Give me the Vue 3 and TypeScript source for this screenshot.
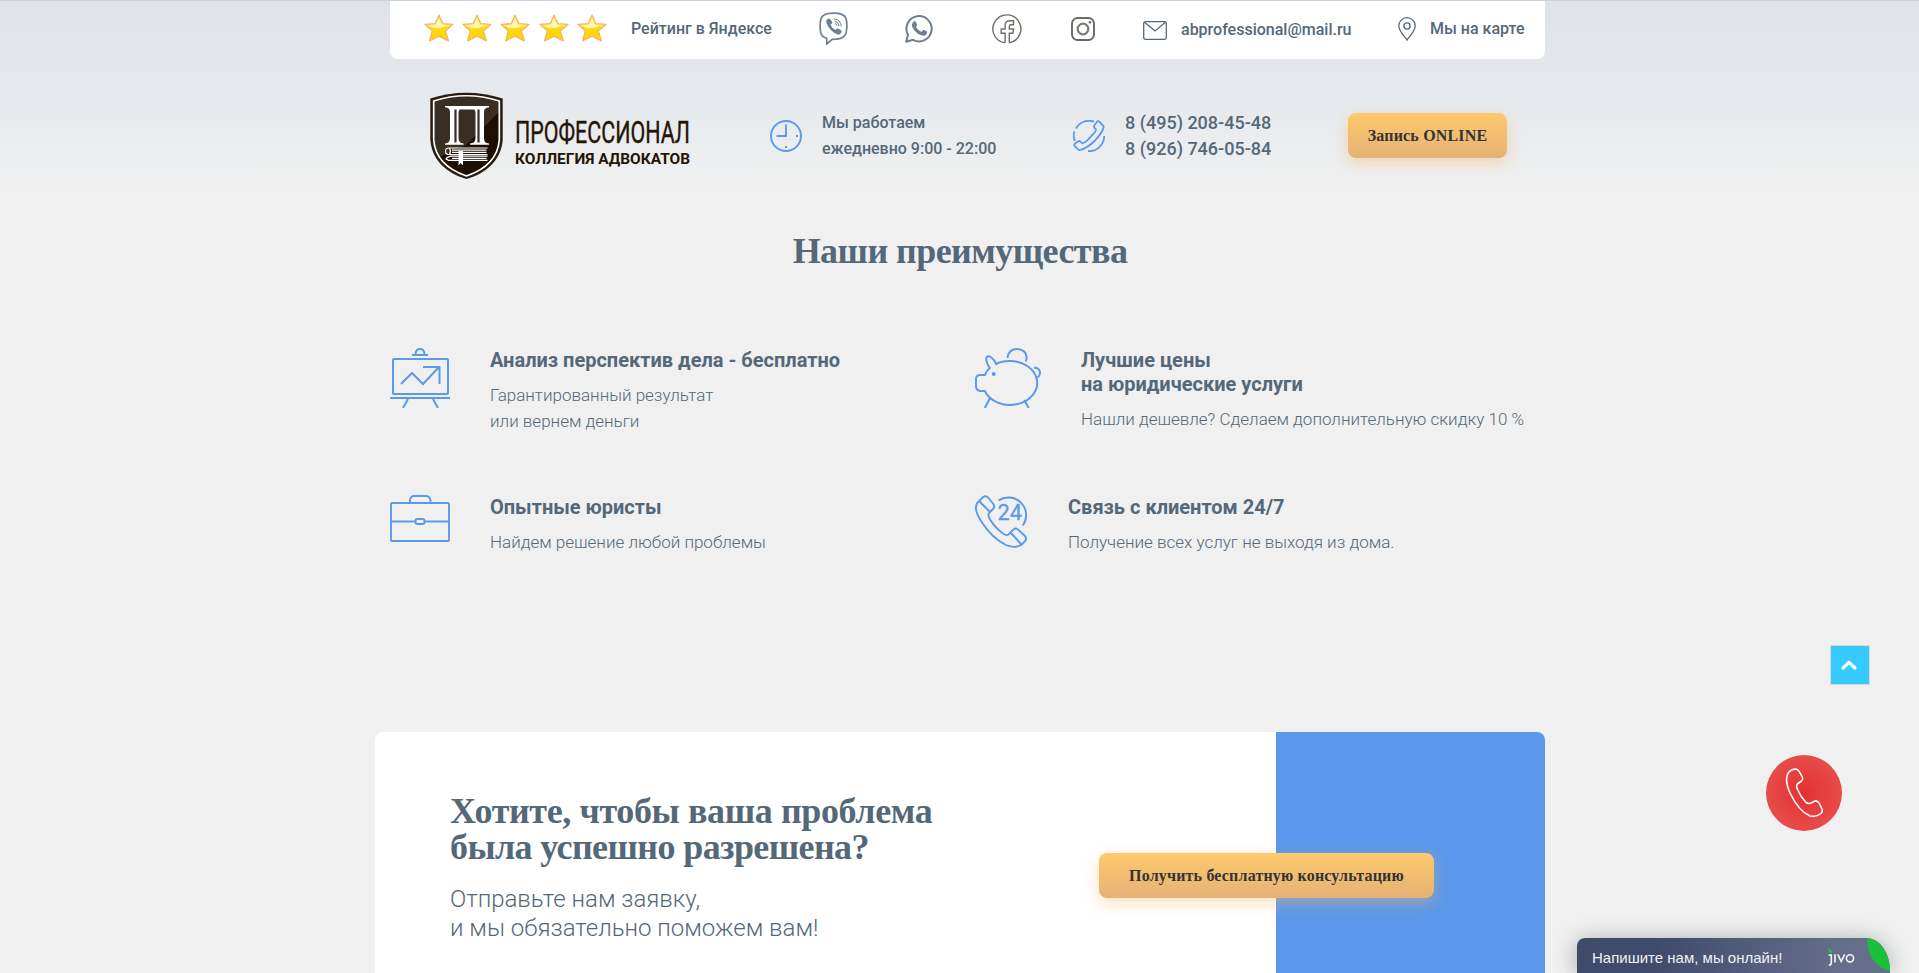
<script setup lang="ts">
interface Feature {
  icon: 'chart' | 'pig' | 'case' | 'call'
  title: string[]
  text: string[]
}

const stars: number[] = [1, 2, 3, 4, 5]

const features: Feature[] = [
  { icon: 'chart', title: ['Анализ перспектив дела - бесплатно'], text: ['Гарантированный результат', 'или вернем деньги'] },
  { icon: 'pig', title: ['Лучшие цены', 'на юридические услуги'], text: ['Нашли дешевле? Сделаем дополнительную скидку 10 %'] },
  { icon: 'case', title: ['Опытные юристы'], text: ['Найдем решение любой проблемы'] },
  { icon: 'call', title: ['Связь с клиентом 24/7'], text: ['Получение всех услуг не выходя из дома.'] },
]
</script>

<template>
  <div class="page">
    <div class="topbar">
      <div class="stars">
        <svg v-for="n in stars" :key="n" class="star" viewBox="0 0 30 28">
          <defs>
            <linearGradient id="gold" x1="0" y1="0" x2="0" y2="1">
              <stop offset="0" stop-color="#ffe23a" />
              <stop offset="0.35" stop-color="#fff27a" />
              <stop offset="0.5" stop-color="#ffd90c" />
              <stop offset="1" stop-color="#ffd500" />
            </linearGradient>
          </defs>
          <path d="M15 1.200 18.800 9.700 29 10.300 21.300 16.900 24.400 26.800 15 22.200 5.600 26.800 8.300 16.900 1 10.300 11.200 9.700Z" fill="url(#gold)" stroke="#f3b562" stroke-width="1.300" stroke-linejoin="round" />
          <path d="M15 4 17.800 10.800 23 11.400Q17 15 9 14L5.500 11.400 12.200 10.800Z" fill="#fffbd0" opacity="0.750" />
        </svg>
      </div>
      <a class="link rating">Рейтинг в Яндексе</a>
      <svg class="viber" viewBox="0 0 29 34">
        <path d="M14.500 1.200C23 1.200 26 3 27 6.500 28 10.500 28 17 27 21 25.800 25 22.500 26.800 17.300 27.200L13 27.400 7.800 32.200V26.400C4 25.400 2.200 23.500 1.600 20.200 1 16 1 11 1.800 7.200 2.800 3 6 1.200 14.500 1.200Z" fill="none" stroke="#6d7f90" stroke-width="1.700" stroke-linejoin="round" />
        <path d="M8 7.400 9.500 6.500Q10.600 6.200 11.300 7.200L13.200 10Q13.500 11 12.600 11.800L11.600 12.800Q13 16.500 16.500 18L17.800 16.800Q18.600 16.200 19.500 16.700L22.300 18.600Q23 19.300 22.500 20.300 21 23.300 18.800 22.600 10.600 19.500 7.300 10.600 6.700 8.400 8 7.400Z" fill="#6d7f90" />
        <path d="M15 6.800Q21.700 7.500 22.300 14.500M15.500 9.200Q19.600 9.700 20.200 14M16 11.500Q18 11.800 18.200 13.800" fill="none" stroke="#6d7f90" stroke-width="1" />
      </svg>
      <svg class="whatsapp" viewBox="0 0 28 29">
        <path d="M1.200 27.700 3 20.800A12.600 12.600 0 1 1 8 25.800Z" fill="none" stroke="#6d7f90" stroke-width="2" stroke-linejoin="round" />
        <path d="M8.600 7.600Q10 6.600 10.900 7.800L12.200 10.800Q12.300 11.500 11 13.100 12.900 16.500 16.400 17.900L18 16.200Q18.500 15.800 19.300 16.100L22.200 17.700Q22.400 20.500 20 21.400 17.600 22.300 13.300 19.900 9.300 17.500 7.300 13.200 6.300 9.700 8.600 7.600Z" fill="#6d7f90" />
      </svg>
      <svg class="facebook" viewBox="0 0 30 30" fill="none" stroke="#6f6d66" stroke-width="1.400">
        <path d="M13.100 28.700V19.200H9.200V15H13.100V11.600C13.100 8.300 15.200 6.700 18 6.700H21.500V10.800H19C17.700 10.800 17.300 11.400 17.300 12.500V15H21.600L20.900 19.200H17.300V28.700" />
        <path d="M13.100 28.800A14 14 0 1 1 17.300 28.700" />
      </svg>
      <svg class="instagram" viewBox="0 0 24 24">
        <rect x="1" y="1" width="22" height="22" rx="5.500" fill="none" stroke="#6b6964" stroke-width="1.900" />
        <circle cx="12" cy="12" r="5.300" fill="none" stroke="#7d7b75" stroke-width="2.200" />
        <circle cx="19" cy="5.200" r="1.300" fill="#6b6964" />
      </svg>
      <svg class="mail" viewBox="0 0 24 19" fill="none" stroke="#53697a" stroke-width="1.300">
        <rect x="0.700" y="0.700" width="22.600" height="17.600" rx="1.800" />
        <path d="M1.500 1.300 12 10 22.500 1.300" />
      </svg>
      <a class="link email">abprofessional@mail.ru</a>
      <svg class="pin" viewBox="0 0 18 24" fill="none" stroke="#53697a" stroke-width="1.300">
        <path d="M9 23C6.500 19.500 .8 13.800 .8 8.900A8.200 8.200 0 0 1 17.200 8.900C17.200 13.800 11.500 19.500 9 23Z" />
        <circle cx="9" cy="9" r="3.100" />
      </svg>
      <a class="link map">Мы на карте</a>
    </div>

    <header class="header">
      <svg class="logo" viewBox="0 0 262 90">
        <defs><clipPath id="shield"><path d="M3.500 11Q36 1 69.500 11V49C68 67 54 79.500 36.500 85.500 19 79.500 5 67 3.500 49Z" /></clipPath></defs>
        <path d="M0.300 7.500Q36 -4 72.700 7.500V49C71 69 57 82 36.500 88 16 82 2 69 0.300 49Z" fill="#2a1c10" />
        <g clip-path="url(#shield)">
          <path d="M0 0H74V18L36 54 0 72Z" fill="#3a2d22" />
          <path d="M74 16V90H0V70L36 54Z" fill="#1f0f02" />
        </g>
        <path d="M3.700 10Q36 -0.500 69.300 10V49C67.800 67.500 54 79 36.500 85 19 79 5.200 67.500 3.700 49Z" fill="none" stroke="#fff" stroke-width="1.700" />
        <path d="M15 15H59V16.200C55.500 16.500 54 18 54 21V46C54 50.500 55 52 59 52.500V53.700H40V52.500C44 52 45.500 50.500 45.500 46V21L44.500 18.500H29.500L28.500 21V46C28.500 50.500 30 52 33.500 52.500V53.700H15V52.500C18.800 52 20 50.500 20 46V21C20 18 18.500 16.500 15 16.200Z" fill="#fff" />
        <path d="M25.500 18.500V51.500M48.500 18.500V51.500" stroke="#3a2d22" stroke-width="2.200" />
        <path d="M57.500 57H19Q15.500 57 15.500 60.200 15.500 63.500 19 63.500H57.500M19.500 57.500Q21.500 60.200 19.500 63.200M22 59.200H56.500M22 61.300H56.500M57.500 65.200H21Q17 66 16 68L18.500 69.300H57.500M22 67.300H56.500" fill="none" stroke="#fff" stroke-width="1.200" />
        <path d="M28.500 60H33V74.500L30.700 72 28.500 74.500Z" fill="#fff" />
        <text x="85" y="51.500" textLength="175" lengthAdjust="spacingAndGlyphs" class="brand">ПРОФЕССИОНАЛ</text>
        <text x="85" y="73" textLength="175" lengthAdjust="spacingAndGlyphs" class="sub">КОЛЛЕГИЯ АДВОКАТОВ</text>
      </svg>
      <svg class="clock" viewBox="0 0 32 32" fill="none" stroke="#5b99eb" stroke-width="1.900">
        <circle cx="16" cy="16" r="15" />
        <path d="M16 4.500V16H6.500M26 16H28M16 26V28" />
      </svg>
      <p class="hours">Мы работаем<br><span>ежедневно 9:00 - 22:00</span></p>
      <svg class="phone" viewBox="0 0 32 32" fill="none" stroke="#5b99eb" stroke-width="1.800">
        <path d="M3 8.500A15 15 0 0 1 21 1.600M1.800 21A15 15 0 0 1 1.300 11.500M31.200 16A15.200 15.200 0 0 1 15 31.100" />
        <path d="M23.800 2Q25 .8 26.200 1.600L30 5.500Q31 6.500 30.200 8.600 28.500 13.500 22 20.500 14.500 28 7.300 29.900 5.800 30.300 4.800 29.200L1.600 25.800Q.7 24.700 2.300 23.300L5.300 21.300Q6.500 20.600 7.500 21.600L9.300 23.300Q11 23.500 15.500 19.200L19.200 15Q23.500 10.800 22.800 9.300L21.400 7.600Q20.600 6.500 21.500 5.200Z" />
      </svg>
      <p class="phones">8 (495) 208-45-48<br>8 (926) 746-05-84</p>
      <button class="gold book">Запись ONLINE</button>
    </header>

    <h2 class="section-title">Наши преимущества</h2>

    <section class="features">
      <article v-for="f in features" :key="f.icon" class="feature" :class="f.icon">
        <div class="pic">
          <svg v-if="f.icon === 'chart'" width="60" height="60" viewBox="0 0 60 60" fill="none" stroke="#5b99eb" stroke-width="2">
            <rect x="3" y="11" width="55" height="35" rx="1" />
            <path d="M0 50H60M22 7H38M25.500 7V6Q26 1 30 1 34 1 34.500 6V7M18 51 13 60M43 51 48 60M11 36 22 25 33 36 49 19M33 19H49.500V36" />
          </svg>
          <svg v-else-if="f.icon === 'pig'" width="66" height="60" viewBox="0 0 67 60" preserveAspectRatio="none" fill="none" stroke="#5b99eb" stroke-width="2">
            <path d="M10 43H5Q1 42 1 38V31Q1 27.500 5 27H10Q12 22.500 15 20 11 14 11.500 10 12.500 7 16 9 20 12 21.500 16 27 13 35 13A27.500 22 0 1 1 10 43ZM15 50.500 10 60M50 52 54.500 60M33 10Q34 1 43 1 52 2 52.500 9 52.500 11 51.500 13.500M60 19.500Q66 20 66 25 65.500 29.500 61.500 30" />
            <circle cx="19" cy="26" r="2" fill="#5b99eb" stroke="none" />
          </svg>
          <svg v-else-if="f.icon === 'case'" width="60" height="47" viewBox="0 0 60 47" fill="none" stroke="#5b99eb" stroke-width="1.900">
            <rect x="1" y="8" width="58" height="38" rx="1" />
            <path d="M20 8V5Q20.500 1 24 1H36Q39.500 1 40.500 5V8M1 26.500H25.500M34.500 26.500H59" />
            <rect x="25.500" y="24" width="9" height="5" rx="2" />
          </svg>
          <svg v-else width="54" height="53" viewBox="0 0 54 53" fill="none" stroke="#5b99eb" stroke-width="1.900">
            <path d="M4 6 8.500 1.700Q10.500 .5 12.500 2L18 8.500Q20.500 11.500 18 14L14 18Q12.500 20.500 15 24.500 21 34 29.500 39.500 32 41 34 39L38.500 34.500Q41 32.500 43.500 35L49.500 40.500Q52 43 50.500 45.500L47 49.500Q40 54 31 50 17 43 7 27.500 -3.500 12 4 6ZM4 6 15 17M35.500 37.500 46.500 49.500M23.500 5.500A17.700 17.700 0 0 1 47.800 30.500" />
            <text x="22.500" y="25" textLength="24.500" lengthAdjust="spacingAndGlyphs" class="num">24</text>
          </svg>
        </div>
        <div class="copy">
          <h3><template v-for="(t, i) in f.title" :key="t"><br v-if="i">{{ t }}</template></h3>
          <p><template v-for="(t, i) in f.text" :key="t"><br v-if="i">{{ t }}</template></p>
        </div>
      </article>
    </section>

    <section class="cta">
      <div class="cta-copy">
        <h2>Хотите, чтобы ваша проблема<br><span class="tight">была успешно разрешена?</span></h2>
        <p>Отправьте нам заявку,<br>и мы обязательно поможем вам!</p>
      </div>
      <div class="cta-side"></div>
      <button class="gold consult">Получить бесплатную консультацию</button>
    </section>

    <button class="to-top" aria-label="Наверх">
      <svg width="18" height="12" viewBox="0 0 18 12"><path d="M3 9 9 3.300 15 9" fill="none" stroke="#fff" stroke-width="3.200" stroke-linecap="round" stroke-linejoin="round" /></svg>
    </button>
    <button class="callback" aria-label="Позвонить">
      <svg width="38" height="50" viewBox="0 0 38 50"><path d="M3.500 4.500Q7 .5 11.500 1.200 13.500 1.500 17 8.500 18.500 11.500 16.500 13L13 15.500Q10.500 17 12.500 21.500 15.500 28.500 21 34.500 23 36 25.500 35.200L30 33Q32 32.500 34 35L37 41Q38 43.500 36 45.500 31 49.500 25 48 14 43.500 5 25 -1 11 3.500 4.500Z" fill="none" stroke="#fff" stroke-width="1.600" /></svg>
    </button>
    <div class="chat">
      <span class="chat-text">Напишите нам, мы онлайн!</span>
      <svg class="jivo" width="28" height="20" viewBox="0 0 28 20">
        <path d="M.2 0Q4 1 4.200 5.500 0 4.500 .2 0Z" fill="#1cc23a" />
        <g fill="none" stroke="#f4f5f7" stroke-width="1.600"><path d="M.5 7H3.300V14.500Q3.300 17.300 .8 17.300M7 6.200V14.500M9.800 6.300 13.200 13.300 16.600 6.300" /><circle cx="22" cy="10.300" r="3.600" /></g>
      </svg>
      <svg class="leaf" width="24" height="35" viewBox="0 0 24 35"><path d="M0 0C14 2 23 16 23 33 8 30 0 16 0 0Z" fill="#1abf3a" /></svg>
    </div>
  </div>
</template>

<style>
body {
  margin: 0;
  background: #f0f0f0;
}
</style>

<style scoped>
.page {
  position: relative;
  box-sizing: border-box;
  width: 1919px;
  height: 973px;
  overflow: hidden;
  border-top: 1px solid #cfd2d6;
  background: linear-gradient(#dfe3e9 0, #e5e9ed 90px, #f0f0f0 190px);
  font-family: Roboto, "Noto Sans", sans-serif;
  color: #546878;
}
h2, h3, p { margin: 0; }
svg { display: block; flex: none; }
button { border: 0; padding: 0; cursor: pointer; }

.topbar {
  display: flex;
  align-items: flex-start;
  box-sizing: border-box;
  width: 1155px;
  height: 58px;
  margin-left: 390px;
  padding-left: 34px;
  border-radius: 0 0 8px 8px;
  background: #fff;
}
.stars { display: flex; width: 207px; gap: 8.200px; margin-top: 13px; }
.star { width: 30px; height: 28px; }
.link { font-size: 16px; font-weight: 500; line-height: 20px; white-space: nowrap; }
.rating { width: 188px; margin-top: 18px; }
.viber { width: 29px; height: 34px; margin-top: 11px; }
.whatsapp { width: 28px; height: 29px; margin: 13px 0 0 57px; }
.facebook { width: 30px; height: 30px; margin: 13px 0 0 59px; }
.instagram { width: 24px; height: 24px; margin: 16px 0 0 49px; }
.mail { width: 24px; height: 19px; margin: 20px 0 0 48px; }
.email { width: 217px; margin: 19px 0 0 14px; }
.pin { width: 18px; height: 24px; margin-top: 16px; }
.map { margin: 18px 0 0 14px; }

.header { display: flex; align-items: center; height: 153px; padding-left: 430px; }
.logo { width: 262px; height: 90px; margin-right: 78px; overflow: visible; }
.brand { font: 400 32px Roboto, sans-serif; fill: #241507; stroke: #241507; stroke-width: 0.400; }
.sub { font: 700 15px Roboto, sans-serif; fill: #241507; }
.clock, .phone { width: 32px; height: 32px; }
.hours { width: 251px; margin-left: 20px; font-size: 16px; font-weight: 500; line-height: 26px; }
.phones { width: 223px; margin-left: 20px; font-size: 18px; font-weight: 500; line-height: 26px; }
.gold {
  height: 45px;
  border-radius: 8px;
  background: linear-gradient(#ffc96c, #e4b277);
  box-shadow: 0 5px 15px rgba(246, 182, 88, 0.42);
  font: 700 16px "Liberation Serif", serif;
  letter-spacing: 0.170px;
  color: #333;
  white-space: nowrap;
}
.book { width: 159px; }

.section-title {
  margin-top: 19px;
  padding-left: 1px;
  font: 700 36px/40px "Liberation Serif", serif;
  letter-spacing: -0.550px;
  text-align: center;
}

.features {
  display: grid;
  grid-template-columns: 585px 585px;
  grid-template-rows: 147px 147px;
  margin: 77px 0 0 390px;
}
.feature { display: flex; }
.pic { width: 100px; flex: none; }
.pig .pic { width: 106px; }
.call .pic { width: 93px; }
.num { font: 400 22px Roboto, sans-serif; fill: #5b99eb; stroke: #5b99eb; stroke-width: 0.300; }
.copy { white-space: nowrap; }
.copy h3 { font-size: 20px; font-weight: 700; line-height: 24px; }
.copy p { margin-top: 10px; font-size: 17px; font-weight: 300; line-height: 26px; }

.cta {
  position: relative;
  display: flex;
  width: 1170px;
  height: 300px;
  margin: 90px 0 0 375px;
  border-radius: 8px 8px 0 0;
  overflow: hidden;
  background: #fff;
}
.cta-copy { box-sizing: border-box; width: 901px; padding: 61px 0 0 75px; }
.cta-copy h2 { font: 700 36px/36px "Liberation Serif", serif; letter-spacing: -0.370px; white-space: nowrap; }
.tight { letter-spacing: -0.600px; }
.cta-copy p { margin-top: 20px; font-size: 24px; font-weight: 300; line-height: 29px; white-space: nowrap; }
.cta-side { flex: 1; background: #5b98eb; }
.consult { position: absolute; left: 724px; top: 121px; width: 335px; }

.to-top {
  position: absolute;
  left: 1830px;
  top: 644px;
  display: flex;
  align-items: center;
  justify-content: center;
  width: 40px;
  height: 40px;
  padding-right: 2px;
  border: 1px solid #d7d9da;
  background: #36caff;
}
.callback {
  position: absolute;
  left: 1766px;
  top: 754px;
  display: flex;
  align-items: center;
  justify-content: center;
  width: 76px;
  height: 76px;
  padding-right: 1px;
  border-radius: 50%;
  background: radial-gradient(circle at center, #e33131, #e84b4b 70%);
}
.chat {
  position: absolute;
  left: 1577px;
  top: 937px;
  display: flex;
  width: 313px;
  height: 35px;
  border-radius: 8px 23px 0 0 / 8px 33px 0 0;
  background: linear-gradient(95deg, #3f4b6b 25%, #656f8c 85%);
  box-shadow: 0 2px 22px rgba(20, 40, 50, 0.350);
  color: #f1f2f5;
}
.chat-text { width: 236px; padding-left: 15px; font: 400 15px/20px "Liberation Sans", sans-serif; margin-top: 10px; white-space: nowrap; }
.jivo { margin-top: 10px; }
.leaf { position: absolute; right: -1px; top: 0; }
</style>
